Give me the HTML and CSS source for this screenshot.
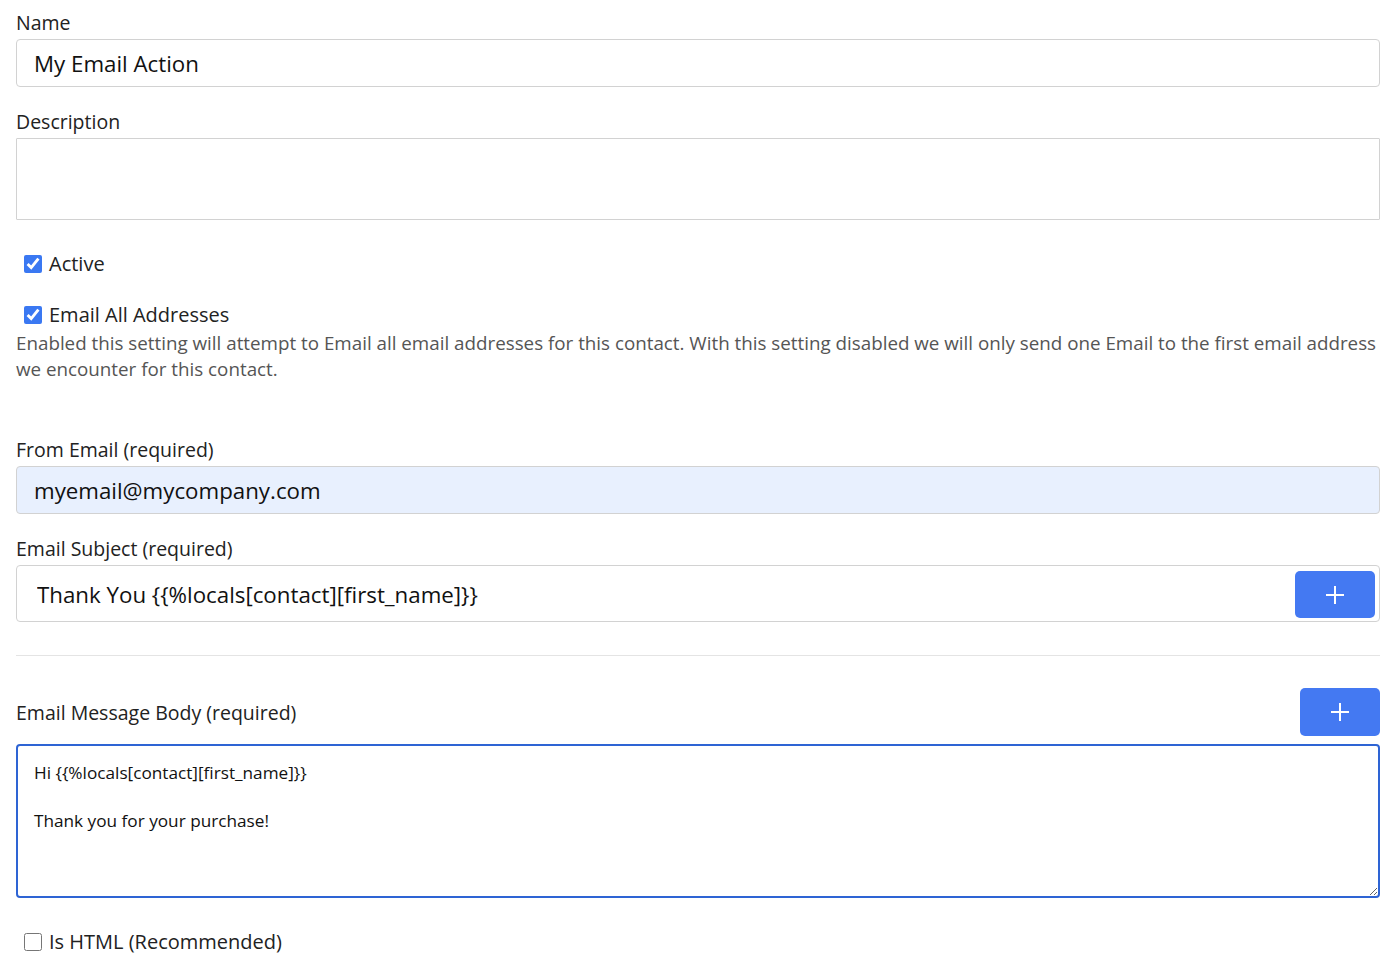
FILE: index.html
```html
<!DOCTYPE html>
<html lang="en">
<head>
    <meta charset="UTF-8">
    <meta name="viewport" content="width=device-width, initial-scale=1.0">
    <title>Email Action</title>
    <link rel="stylesheet" href="styles.css">
</head>
<body>
    <form class="action-form">
        <div class="field">
            <label for="name">Name</label>
            <input type="text" id="name" class="text-input" value="My Email Action">
        </div>

        <div class="field">
            <label for="description">Description</label>
            <textarea id="description" class="desc-input"></textarea>
        </div>

        <div class="check-row check-active">
            <input type="checkbox" id="active" checked>
            <label for="active">Active</label>
        </div>

        <div class="check-row check-all">
            <input type="checkbox" id="all_addresses" checked>
            <label for="all_addresses">Email All Addresses</label>
        </div>
        <p class="help-text">Enabled this setting will attempt to Email all email addresses for this contact. With this setting disabled we will only send one Email to the first email address we encounter for this contact.</p>

        <div class="field field-from">
            <label for="from_email">From Email (required)</label>
            <input type="text" id="from_email" class="text-input autofilled" value="myemail@mycompany.com">
        </div>

        <div class="field">
            <label for="subject">Email Subject (required)</label>
            <div class="input-group">
                <input type="text" id="subject" value="Thank You {{%locals[contact][first_name]}}">
                <button type="button" class="add-btn">
                    <svg width="20" height="20" viewBox="0 0 20 20"><path d="M10 1v18M1 10h18" stroke="#fff" stroke-width="2"/></svg>
                </button>
            </div>
        </div>

        <hr class="divider">

        <div class="body-head">
            <label for="body">Email Message Body (required)</label>
            <button type="button" class="add-btn">
                <svg width="20" height="20" viewBox="0 0 20 20"><path d="M10 1v18M1 10h18" stroke="#fff" stroke-width="2"/></svg>
            </button>
        </div>
        <textarea id="body" class="body-input">Hi {{%locals[contact][first_name]}}

Thank you for your purchase!</textarea>

        <div class="check-row check-html">
            <input type="checkbox" id="is_html">
            <label for="is_html">Is HTML (Recommended)</label>
        </div>
    </form>
</body>
</html>
```

FILE: styles.css
```css
body {
    margin: 0;
    padding: 10px 20px 0 16px;
    font-family: "Open Sans", "Noto Sans", sans-serif;
    color: #222;
    background-color: #fff;
}

.field {
    margin-bottom: 22px;
}

.field label {
    display: block;
    font-size: 19.5px;
    line-height: 26px;
    margin-bottom: 3px;
}

.text-input {
    display: block;
    width: 100%;
    height: 48px;
    padding: 0 17px;
    border: 1px solid #d2d2d2;
    border-radius: 4px;
    box-sizing: border-box;
    font-family: inherit;
    font-size: 22.3px;
    color: #111;
    outline: none;
}

.autofilled {
    background-color: #e8f0fe;
}

.desc-input {
    display: block;
    width: 100%;
    height: 82px;
    border: 1px solid #d2d2d2;
    border-radius: 1px;
    box-sizing: border-box;
    resize: none;
    outline: none;
}

.check-row {
    display: flex;
    align-items: center;
    padding-left: 8px;
    font-size: 20px;
    line-height: 26px;
}

.check-row input {
    width: 18px;
    height: 18px;
    margin: 0 7px 0 0;
    accent-color: #3a78f2;
}

.check-active {
    margin-top: 31px;
}

.check-all {
    margin-top: 25px;
}

.help-text {
    margin: 2px 0 0;
    font-size: 18.8px;
    line-height: 26px;
    color: #555;
}

.field-from {
    margin-top: 55px;
}

.input-group {
    display: flex;
    align-items: flex-start;
    height: 57px;
    padding: 5px 4px 0 20px;
    border: 1px solid #d2d2d2;
    border-radius: 4px;
    box-sizing: border-box;
}

.input-group input {
    flex: 1;
    height: 47px;
    border: none;
    padding: 0;
    font-family: inherit;
    font-size: 22.3px;
    color: #111;
    outline: none;
}

.add-btn {
    display: flex;
    align-items: center;
    justify-content: center;
    width: 80px;
    height: 47px;
    border: none;
    border-radius: 5px;
    background-color: #4479f2;
    padding: 0;
    cursor: pointer;
}

.divider {
    margin: 33px 0 32px;
    border: none;
    border-top: 1px solid #e4e4e4;
}

.body-head {
    display: flex;
    justify-content: space-between;
    align-items: center;
    margin-bottom: 8px;
    font-size: 19.5px;
}

.body-head .add-btn {
    height: 48px;
}

.body-input {
    display: block;
    width: 100%;
    height: 154px;
    padding: 15px 16px;
    border: 2px solid #2e64d4;
    border-radius: 4px;
    box-sizing: border-box;
    font-family: inherit;
    font-size: 17.2px;
    line-height: 24px;
    color: #111;
    outline: none;
}

.check-html {
    margin-top: 31px;
}

.check-html input {
    accent-color: #777;
}
```
